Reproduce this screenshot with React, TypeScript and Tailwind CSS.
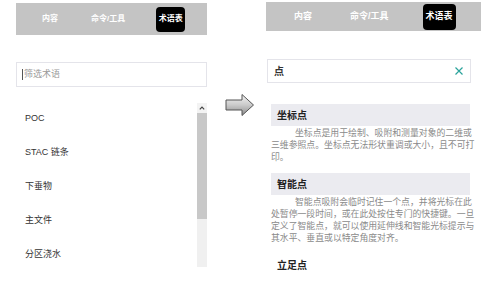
import React from 'react';

const terms = ['POC', 'STAC 链条', '下垂物', '主文件', '分区浇水'];

// lines are broken where the original breaks them
const results = [
  {
    title: '坐标点',
    shaded: true,
    lines: ['坐标点是用于绘制、吸附和测量对象的二维或', '三维参照点。坐标点无法形状重调或大小，且不可打', '印。'],
  },
  {
    title: '智能点',
    shaded: true,
    lines: [
      '智能点吸附会临时记住一个点，并将光标在此',
      '处暂停一段时间，或在此处按住专门的快捷键。一旦',
      '定义了智能点，就可以使用延伸线和智能光标提示与',
      '其水平、垂直或以特定角度对齐。',
    ],
  },
  { title: '立足点', shaded: false, lines: [] as string[] },
];

function Arrow() {
  return (
    <svg width="30" height="24" viewBox="0 0 30 24">
      <defs>
        <linearGradient id="ag" x1="0" y1="0" x2="0" y2="1">
          <stop offset="0" stopColor="#f4f4f4" />
          <stop offset="0.5" stopColor="#cacaca" />
          <stop offset="1" stopColor="#8a8a8a" />
        </linearGradient>
      </defs>
      <path d="M1 7 H17 V1.5 L28.5 12 L17 22.5 V17 H1 Z" fill="url(#ag)" stroke="#555" strokeWidth="1" strokeLinejoin="round" />
    </svg>
  );
}

export default function App() {
  return (
    <div
      className="w-[481px] h-[286px] flex overflow-hidden bg-white"
      style={{ fontFamily: '"Liberation Sans", "Noto Sans CJK SC", sans-serif' }}
    >
      {/* before */}
      <div className="ml-[16px] w-[191px] flex flex-col pt-[3px]">
        <div className="h-[32px] bg-[#c4c4c4] flex items-center text-[8px] font-bold text-white pl-[26px]">
          <span>内容</span>
          <span className="ml-[33px]">命令/工具</span>
          <span className="ml-[31px] w-[29px] h-[25px] bg-black rounded-[4px] flex items-center justify-center">术语表</span>
        </div>
        <div className="mt-[27px] h-[25px] border border-[#e4e4ea] flex items-center pl-[5px] text-[9px] text-[#999]">
          <span className="w-px h-[11px] bg-[#555] mr-[1px]" />
          <span>筛选术语</span>
        </div>
        <div className="mt-[14px] h-[166px] flex">
          <div className="flex-1 overflow-hidden pl-[9px] text-[9px] text-[#333]">
            {terms.map((t) => (
              <div key={t} className="h-[34px] leading-[34px]">{t}</div>
            ))}
          </div>
          <div className="w-[10px] mt-[2px] flex flex-col">
            <div className="h-[10px] bg-[#f3f3f3] flex items-center justify-center">
              <svg width="6" height="4" viewBox="0 0 6 4">
                <polyline points="0.8,3.3 3,1 5.2,3.3" fill="none" stroke="#444" strokeWidth="1.2" />
              </svg>
            </div>
            <div className="h-[106px] bg-[#c8c8c8]" />
            <div className="flex-1 bg-[#f0f0f0]" />
          </div>
        </div>
      </div>

      <div className="ml-[18px] mt-[93px]">
        <Arrow />
      </div>

      {/* after */}
      <div className="ml-[11px] flex-1 flex flex-col pt-[2px]">
        <div className="h-[31px] bg-[#c4c4c4] flex items-center text-[9px] font-bold text-white pl-[28px]">
          <span>内容</span>
          <span className="ml-[38px]">命令/工具</span>
          <span className="ml-[34px] w-[33px] h-[26px] bg-black rounded-[4px] flex items-center justify-center">术语表</span>
        </div>
        <div className="mt-[28px] ml-[1px] w-[204px] h-[25px] border border-[#e4e4ea] flex items-center justify-between pl-[6px] pr-[7px]">
          <span className="text-[10px] font-bold text-[#333]">点</span>
          <svg width="8" height="8" viewBox="0 0 8 8">
            <path d="M0.5 0.5 L7.5 7.5 M7.5 0.5 L0.5 7.5" stroke="#2aa39b" strokeWidth="1.2" />
          </svg>
        </div>
        <div className="mt-[21px] ml-[5px] w-[199px] flex flex-col">
          {results.map((r) => (
            <div key={r.title} className="mb-[10px]">
              <div className={`h-[22px] flex items-center pl-[6px] text-[10px] font-bold text-[#222] ${r.shaded ? 'bg-[#ebebf0]' : ''}`}>
                {r.title}
              </div>
              {r.lines.length > 0 && (
                <div className="mt-[1px] text-[8.85px] leading-[12px] text-[#8a8a8a] [text-spacing-trim:space-all]">
                  {r.lines.map((l, i) => (
                    <div key={i} className={`whitespace-nowrap ${i === 0 ? 'pl-[24px]' : ''}`}>{l}</div>
                  ))}
                </div>
              )}
            </div>
          ))}
        </div>
      </div>
    </div>
  );
}
